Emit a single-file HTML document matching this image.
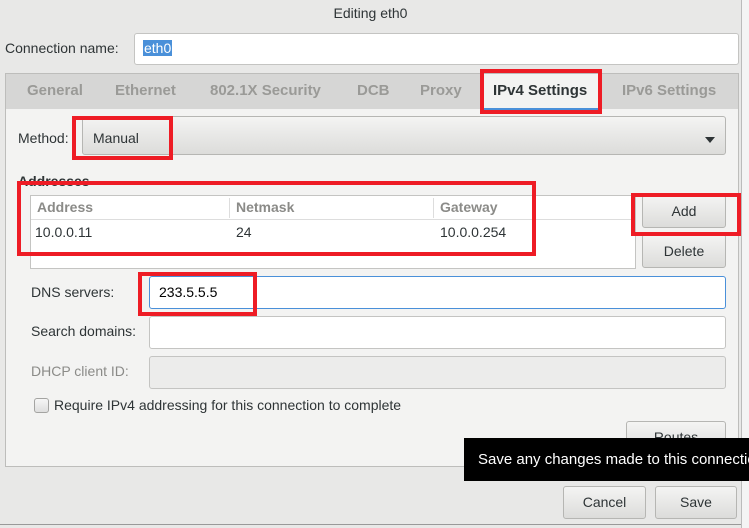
<!DOCTYPE html>
<html><head><style>
*{box-sizing:border-box;margin:0;padding:0}
body{width:749px;height:528px;background:#e8e8e7;font-family:"Liberation Sans","DejaVu Sans",sans-serif;font-size:14px;color:#2e3436;position:relative;overflow:hidden}
.a{position:absolute;white-space:nowrap}
.entry{position:absolute;background:#fff;border:1px solid #c4c4c2;border-radius:3px}
.btn{position:absolute;background:linear-gradient(#f4f4f3,#dcdcda);border:1px solid #b6b6b3;border-radius:3px;text-align:center;color:#2e3436}
.red{position:absolute;border:4px solid #ee1c25}
.tab{position:absolute;top:82px;color:#9a9a97;font-size:15px;font-weight:bold}
</style></head><body>
<div class="a" style="left:0;top:0;width:741px;text-align:center;top:5px">Editing eth0</div>
<div class="a" style="left:741px;top:0;width:8px;height:528px;background:#f4f4f4;border-left:1px solid #bbb"></div>
<div class="a" style="left:5px;top:40px">Connection name:</div>
<div class="entry" style="left:134px;top:33px;width:605px;height:32px"></div>
<div class="a" style="left:143px;top:40px;background:#4a90d9;color:#fff;padding:0 1px">eth0</div>

<div class="a" style="left:5px;top:73px;width:734px;height:394px;background:#f3f3f2;border:1px solid #bdbdbb"></div>
<div class="a" style="left:6px;top:74px;width:732px;height:35px;background:#d6d6d5"></div>
<div class="tab" style="left:27px">General</div>
<div class="tab" style="left:115px">Ethernet</div>
<div class="tab" style="left:210px">802.1X Security</div>
<div class="tab" style="left:357px">DCB</div>
<div class="tab" style="left:420px">Proxy</div>
<div class="a" style="left:483px;top:74px;width:115px;height:36px;background:#f3f3f2;border-bottom:2px solid #4a90d9"></div>
<div class="tab" style="left:493px;color:#2e3436">IPv4 Settings</div>
<div class="tab" style="left:622px">IPv6 Settings</div>

<div class="a" style="left:18px;top:130px">Method:</div>
<div class="btn" style="left:82px;top:116px;width:644px;height:39px"></div>
<div class="a" style="left:93px;top:130px">Manual</div>
<div class="a" style="left:705px;top:137px;width:0;height:0;border-left:5px solid transparent;border-right:5px solid transparent;border-top:6px solid #2e3436"></div>

<div class="a" style="left:18px;top:173px;font-weight:bold">Addresses</div>
<div class="entry" style="left:30px;top:195px;width:606px;height:74px;border-radius:0"></div>
<div class="a" style="left:31px;top:196px;width:604px;height:24px;border-bottom:1px solid #ddd"></div>
<div class="a" style="left:229px;top:198px;width:1px;height:20px;background:#ddd"></div>
<div class="a" style="left:433px;top:198px;width:1px;height:20px;background:#ddd"></div>
<div class="a" style="left:37px;top:199px;color:#8b8b88;font-weight:bold">Address</div>
<div class="a" style="left:236px;top:199px;color:#8b8b88;font-weight:bold">Netmask</div>
<div class="a" style="left:440px;top:199px;color:#8b8b88;font-weight:bold">Gateway</div>
<div class="a" style="left:35px;top:224px">10.0.0.11</div>
<div class="a" style="left:236px;top:224px">24</div>
<div class="a" style="left:440px;top:224px">10.0.0.254</div>
<div class="btn" style="left:642px;top:195px;width:84px;height:33px;line-height:31px">Add</div>
<div class="btn" style="left:642px;top:234px;width:84px;height:34px;line-height:32px">Delete</div>

<div class="a" style="left:31px;top:284px">DNS servers:</div>
<div class="entry" style="left:149px;top:276px;width:577px;height:33px;border:1px solid #4a90d9"></div>
<div class="a" style="left:159px;top:284px;color:#000">233.5.5.5</div>
<div class="a" style="left:31px;top:323px">Search domains:</div>
<div class="entry" style="left:149px;top:316px;width:577px;height:33px"></div>
<div class="a" style="left:31px;top:363px;color:#8b8b88">DHCP client ID:</div>
<div class="entry" style="left:149px;top:356px;width:577px;height:33px;background:#ececeb"></div>
<div class="a" style="left:34px;top:398px;width:15px;height:15px;border:1px solid #a4a4a2;border-radius:3px;background:linear-gradient(#f6f6f6,#dedede)"></div>
<div class="a" style="left:54px;top:397px">Require IPv4 addressing for this connection to complete</div>
<div class="btn" style="left:626px;top:421px;width:100px;height:34px;line-height:30px">Routes</div>

<div class="btn" style="left:563px;top:486px;width:83px;height:33px;line-height:31px">Cancel</div>
<div class="btn" style="left:655px;top:486px;width:82px;height:33px;line-height:31px">Save</div>
<div class="a" style="left:0;top:524px;width:741px;height:1px;background:#999"></div>

<div class="a" style="left:464px;top:438px;width:285px;height:43px;background:#000;color:#fff;padding:13px 0 0 14px;font-size:15px">Save any changes made to this connection</div>

<div class="red" style="left:72px;top:116px;width:101px;height:44px"></div>
<div class="red" style="left:480px;top:69px;width:122px;height:45px"></div>
<div class="red" style="left:17px;top:181px;width:519px;height:75px"></div>
<div class="red" style="left:631px;top:193px;width:110px;height:43px"></div>
<div class="red" style="left:138px;top:272px;width:119px;height:44px"></div>
</body></html>
